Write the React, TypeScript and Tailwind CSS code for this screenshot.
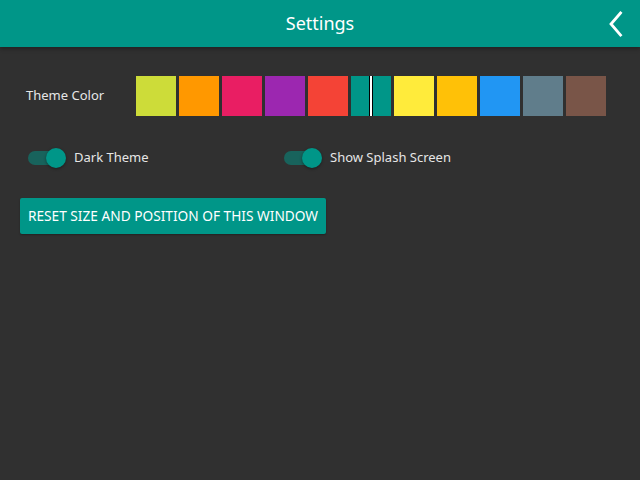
import React, { useState } from "react";

const swatches = [
  "#cddc39",
  "#ff9800",
  "#e91e63",
  "#9c27b0",
  "#f44336",
  "#009688",
  "#ffeb3b",
  "#ffc107",
  "#2196f3",
  "#607d8b",
  "#795548",
];

function Toggle({ on, label, onClick }: { on: boolean; label: string; onClick: () => void }) {
  return (
    <button onClick={onClick} className="flex items-center gap-[8px] text-[13px] text-[#e6e6e6]">
      <span className="relative w-[38px] h-[20px] flex items-center">
        <span className="w-[34px] h-[14px] rounded-full bg-[#009688]/50" />
        <span
          className={`absolute top-0 w-[20px] h-[20px] rounded-full shadow-[0_1px_3px_rgba(0,0,0,0.4)] ${
            on ? "left-[18px] bg-[#009688]" : "left-0 bg-[#bdbdbd]"
          }`}
        />
      </span>
      <span>{label}</span>
    </button>
  );
}

export default function App() {
  const [selected, setSelected] = useState(5);
  const [dark, setDark] = useState(true);
  const [splash, setSplash] = useState(true);

  return (
    <div
      className="w-[640px] h-[480px] bg-[#303030] flex flex-col"
      style={{ fontFamily: '"Noto Sans", "Open Sans", sans-serif' }}
    >
      {/* Header */}
      <header className="h-[47px] bg-[#009688] flex items-center justify-center relative shadow-[0_2px_4px_rgba(0,0,0,0.3)]">
        <h1 className="text-[18px] text-white">Settings</h1>
        <button className="absolute right-[15px] top-[11px]">
          <svg width="18" height="26" viewBox="0 0 18 26" fill="none">
            <path d="M13.5 2 L4 13 L13.5 24" stroke="white" strokeWidth="2.8" strokeLinecap="square" />
          </svg>
        </button>
      </header>

      {/* Theme colors */}
      <div className="flex items-center pl-[26px] mt-[29px]">
        <span className="w-[110px] text-[13px] text-[#e6e6e6]">Theme Color</span>
        <div className="flex gap-[3px]">
          {swatches.map((c, i) => (
            <button
              key={c}
              onClick={() => setSelected(i)}
              className="relative w-[40px] h-[40px] flex justify-center"
              style={{ background: c }}
            >
              {selected === i && (
                <span className="w-[4px] h-full border-x border-black bg-white" />
              )}
            </button>
          ))}
        </div>
      </div>

      {/* Toggles */}
      <div className="flex items-center pl-[28px] mt-[32px]">
        <div className="w-[256px]">
          <Toggle on={dark} label="Dark Theme" onClick={() => setDark(!dark)} />
        </div>
        <Toggle on={splash} label="Show Splash Screen" onClick={() => setSplash(!splash)} />
      </div>

      {/* Reset */}
      <div className="pl-[20px] mt-[30px]">
        <button className="w-[306px] h-[36px] rounded-[2px] bg-[#009688] text-white text-[13.7px] uppercase shadow-[0_1px_2px_rgba(0,0,0,0.3)]">
          Reset size and position of this window
        </button>
      </div>
    </div>
  );
}
